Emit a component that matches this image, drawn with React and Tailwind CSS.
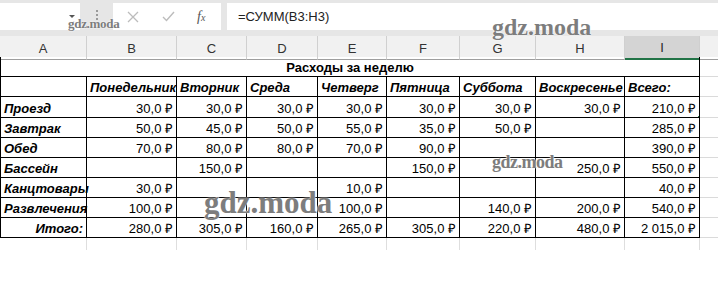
import React from 'react';

const COLS = 'grid grid-cols-[87px_90px_70px_71px_69px_73px_76px_89px_75px_18px]';
const LETTERS = ['A', 'B', 'C', 'D', 'E', 'F', 'G', 'H', 'I'];
const DAYS = ['Понедельник', 'Вторник', 'Среда', 'Четверг', 'Пятница', 'Суббота', 'Воскресенье', 'Всего:'];

const rows = [
  ['Проезд', '30,0 ₽', '30,0 ₽', '30,0 ₽', '30,0 ₽', '30,0 ₽', '30,0 ₽', '30,0 ₽', '210,0 ₽'],
  ['Завтрак', '50,0 ₽', '45,0 ₽', '50,0 ₽', '55,0 ₽', '35,0 ₽', '50,0 ₽', '', '285,0 ₽'],
  ['Обед', '70,0 ₽', '80,0 ₽', '80,0 ₽', '70,0 ₽', '90,0 ₽', '', '', '390,0 ₽'],
  ['Бассейн', '', '150,0 ₽', '', '', '150,0 ₽', '', '250,0 ₽', '550,0 ₽'],
  ['Канцтовары', '30,0 ₽', '', '', '10,0 ₽', '', '', '', '40,0 ₽'],
  ['Развлечения', '100,0 ₽', '', '', '100,0 ₽', '', '140,0 ₽', '200,0 ₽', '540,0 ₽'],
  ['Итого:', '280,0 ₽', '305,0 ₽', '160,0 ₽', '265,0 ₽', '305,0 ₽', '220,0 ₽', '480,0 ₽', '2 015,0 ₽'],
];

function FormulaBar() {
  return (
    <div className="flex h-[36px] bg-[#e6e6e6] pt-[3px]">
      <div className="relative h-[27px] w-[80px] bg-white">
        <span className="absolute left-[69px] top-[12px] h-0 w-0 border-x-[3px] border-t-[3px] border-x-transparent border-t-[#555]" />
      </div>
      <div className="flex h-[27px] w-[33px] flex-col items-center justify-center gap-[2px]">
        <span className="h-[2px] w-[2px] bg-[#9a9a9a]" />
        <span className="h-[2px] w-[2px] bg-[#9a9a9a]" />
        <span className="h-[2px] w-[2px] bg-[#9a9a9a]" />
        <span className="h-[2px] w-[2px] bg-[#9a9a9a]" />
      </div>
      <div className="flex h-[27px] w-[108px] items-center bg-white">
        <svg width="12" height="12" viewBox="0 0 12 12" className="ml-[14px]">
          <path d="M1 1L11 11M11 1L1 11" stroke="#bcbcbc" strokeWidth="1.3" fill="none" />
        </svg>
        <svg width="13" height="11" viewBox="0 0 13 11" className="ml-[23px]">
          <path d="M1 6L4.5 9.5L12 1" stroke="#bcbcbc" strokeWidth="1.4" fill="none" />
        </svg>
        <span className="ml-[22px] font-['Liberation_Serif'] text-[14px] italic text-[#555]">
          f<span className="text-[10px]">x</span>
        </span>
      </div>
      <div className="w-[6px]" />
      <div className="flex h-[27px] flex-1 items-center bg-white pl-[11px] text-[13px] text-[#222]">
        =СУММ(B3:H3)
      </div>
    </div>
  );
}

function Header() {
  return (
    <div className={`${COLS} h-[21px] bg-[#f1f1f1] text-[13px] text-[#333]`}>
      {LETTERS.map((l) =>
        l === 'I' ? (
          <div key={l} className="flex items-center justify-center border-b-2 border-r border-b-[#217346] border-r-[#cfcfcf] bg-[#d4d4d4] pt-[2px] text-[#262626]">
            {l}
          </div>
        ) : (
          <div key={l} className="flex items-center justify-center border-b border-r border-b-[#9e9e9e] border-r-[#d0d0d0] pt-[2px]">
            {l}
          </div>
        )
      )}
      <div className="border-b border-b-[#9e9e9e]" />
    </div>
  );
}

function Cell({ children, first, right, label, selected, height }) {
  return (
    <div
      className={`relative flex items-end whitespace-nowrap border-b border-r border-black px-[3px] pb-[1px] leading-[15px] ${
        first ? 'border-l' : ''
      } ${right ? 'justify-end' : 'justify-start'} ${label ? 'font-bold italic' : ''} ${
        height === 21 ? 'h-[21px]' : 'h-[20px]'
      } ${first ? '' : 'overflow-hidden'}`}
    >
      {children}
      {selected && (
        <>
          <span className="absolute inset-[-2px] border-2 border-[#217346]" />
          <span className="absolute bottom-[-5px] right-[-5px] z-10 h-[7px] w-[7px] border border-white bg-[#217346]" />
        </>
      )}
    </div>
  );
}

export default function App() {
  return (
    <div className="relative h-[285px] w-[718px] overflow-hidden bg-white font-['Liberation_Sans',sans-serif] text-[13px] text-black">
      <FormulaBar />
      <Header />

      <div className={`${COLS}`}>
        <div className="col-span-9 flex h-[20px] items-end justify-center border-x border-b border-black pb-[1px] font-bold leading-[15px]">
          Расходы за неделю
        </div>
        <div className="border-b border-[#dadada]" />
      </div>

      <div className={`${COLS}`}>
        <Cell first />
        {DAYS.map((d) => (
          <Cell key={d} label>
            {d}
          </Cell>
        ))}
        <div className="border-b border-[#dadada]" />
      </div>

      {rows.map((r, i) => (
        <div key={r[0]} className={`${COLS}`}>
          <Cell first label right={r[0] === 'Итого:'} height={i === 0 ? 21 : 20}>
            {r[0]}
          </Cell>
          {r.slice(1).map((v, j) => (
            <Cell key={j} right height={i === 0 ? 21 : 20} selected={i === 0 && j === 7}>
              {v}
            </Cell>
          ))}
          <div className="border-b border-[#dadada]" />
        </div>
      ))}

      <div className={`${COLS} h-[12px]`}>
        {LETTERS.map((l) => (
          <div key={l} className="border-r border-[#dedede]" />
        ))}
        <div />
      </div>

      <div className="pointer-events-none absolute inset-0 font-['Liberation_Serif',serif] font-bold text-[#7d7d7d] [text-shadow:0_0_2px_#fff,0_0_1px_#fff]">
        <span className="absolute left-[68px] top-[14px] text-[13px] tracking-[-0.3px]">gdz.moda</span>
        <span className="absolute left-[492px] top-[9px] text-[24px]">gdz.moda</span>
        <span className="absolute left-[492px] top-[149px] text-[18px] tracking-[-0.5px]">gdz.moda</span>
        <span className="absolute left-[204px] top-[180px] text-[31px]">gdz.moda</span>
      </div>
    </div>
  );
}
